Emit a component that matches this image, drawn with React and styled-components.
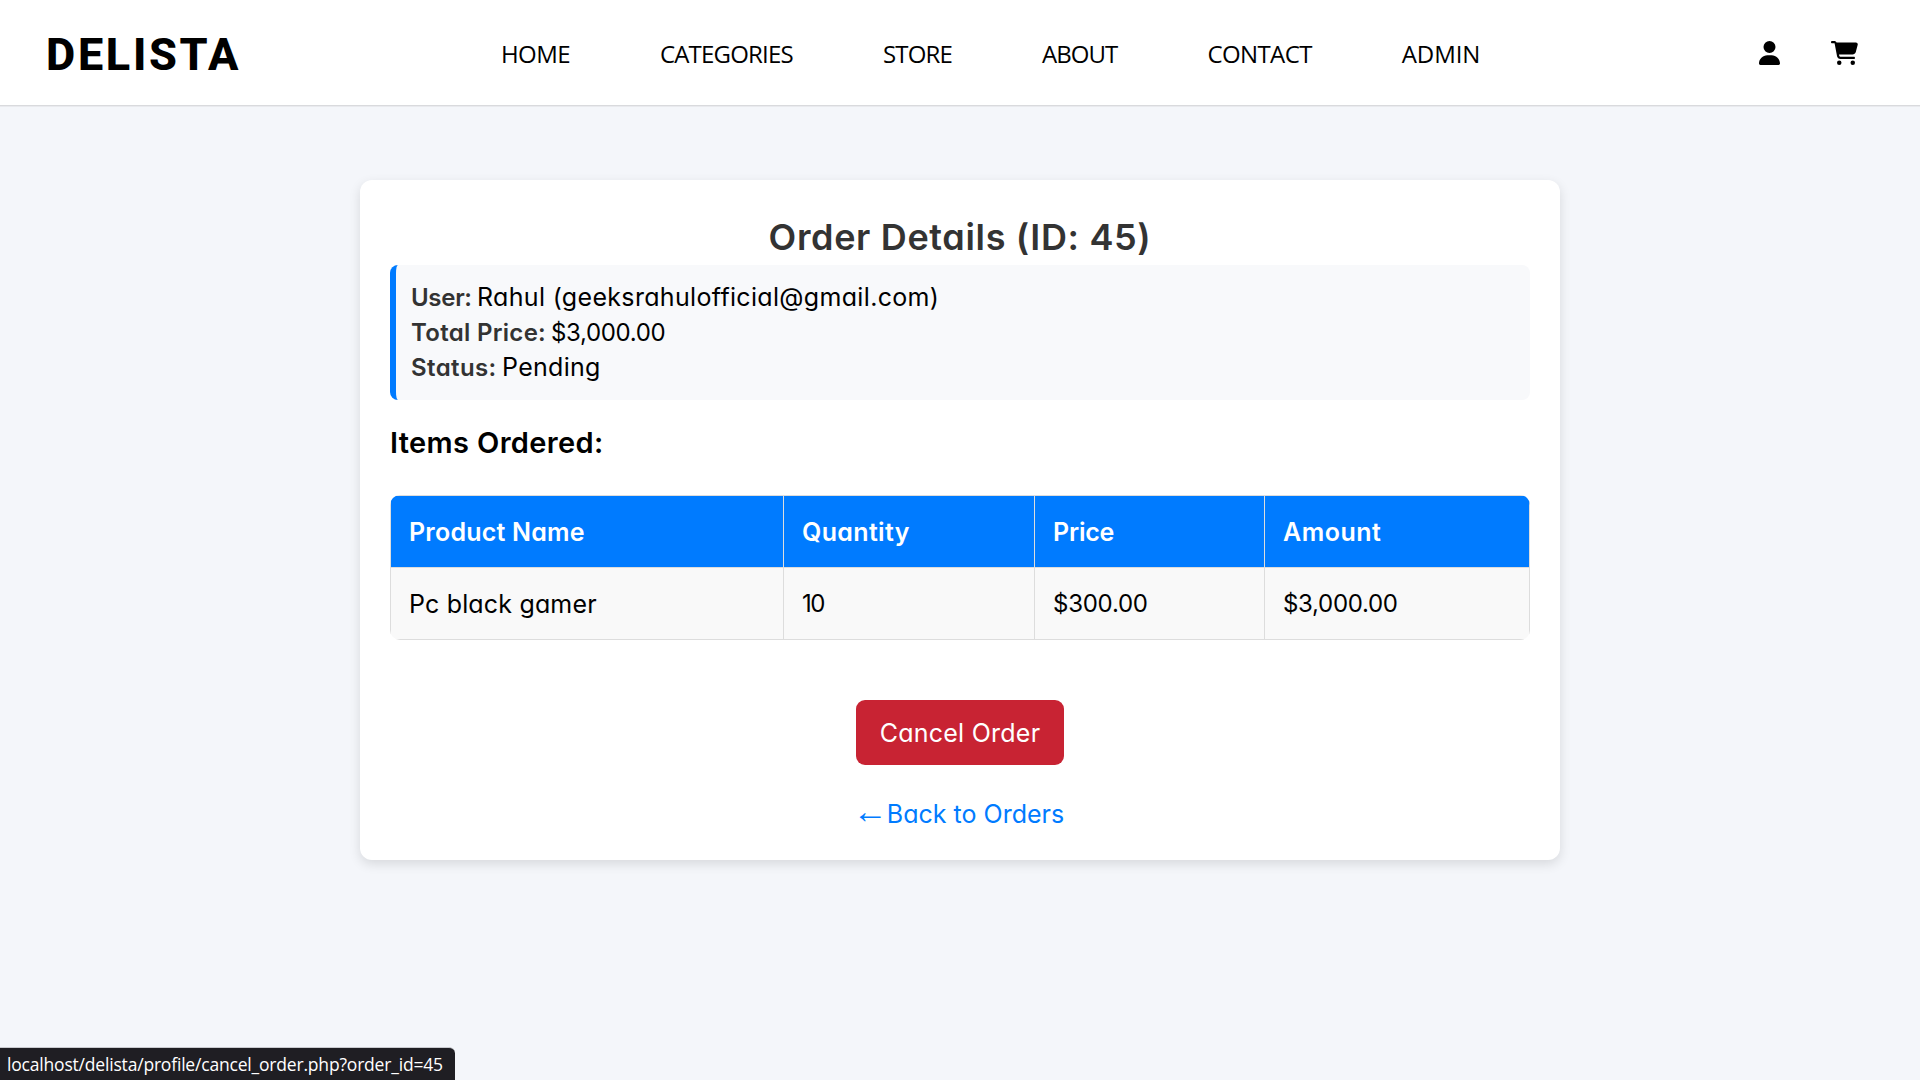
import React from 'react';
import styled, { createGlobalStyle } from 'styled-components';
import { FaUser, FaCartShopping } from 'react-icons/fa6';

const GlobalStyle = createGlobalStyle`
  * { box-sizing: border-box; margin: 0; padding: 0; }
  body {
    min-height: 100vh;
    background: #f4f6fa;
    color: #000;
    font-family: Inter, 'Liberation Sans', sans-serif;
    font-size: 25px;
    font-feature-settings: 'cv11';
  }
`;

const Header = styled.header`
  display: flex;
  align-items: center;
  height: 106px;
  padding: 0 62px 0 46px;
  background: #fff;
  border-bottom: 1px solid #d9dadd;
  box-shadow: 0 1px 0 #e9eaee;
`;

const Logo = styled.a`
  width: 455px;
  padding-top: 3px;
  font-family: Roboto, sans-serif;
  font-size: 45px;
  font-weight: 800;
  line-height: 1;
  letter-spacing: 2.7px;
`;

const Nav = styled.nav`
  display: flex;
  gap: 90px;
  padding-top: 3px;
`;

const NavLink = styled.a`
  font-family: 'Open Sans', 'Noto Sans', sans-serif;
  font-size: 24px;
  line-height: 32px;
  white-space: nowrap;
  letter-spacing: ${(p) => p.$track}px;
`;

const Actions = styled.div`
  display: flex;
  align-items: center;
  gap: 51px;
  margin-left: auto;

  svg { display: block; height: 24px; }
  svg:first-child { width: 21px; }
  svg:last-child { width: 27px; }
`;

const Card = styled.main`
  width: 1200px;
  margin: 74px auto 0;
  padding: 30px;
  background: #fff;
  border-radius: 12px;
  box-shadow: 0 4px 12px rgba(0, 0, 0, 0.12);
`;

const Title = styled.h1`
  color: #333;
  font-size: 36px;
  font-weight: 600;
  line-height: 55px;
  letter-spacing: 0.65px;
  text-align: center;
`;

const Info = styled.section`
  padding: 15px;
  background: #f8f9fb;
  border-left: 6px solid #007bff;
  border-radius: 8px;
`;

const Field = styled.p`
  display: flex;
  line-height: 35px;
`;

const Label = styled.strong`
  width: ${(p) => p.$w}px;
  color: #333;
  font-size: 24px;
  font-weight: 600;
  white-space: nowrap;
  letter-spacing: ${(p) => p.$track}px;
`;

const Text = styled.span`
  font-size: ${(p) => p.$size}px;
  letter-spacing: ${(p) => p.$track}px;
`;

const Subtitle = styled.h2`
  margin-top: 22px;
  font-size: 29px;
  font-weight: 600;
  line-height: 42px;
  letter-spacing: 0.35px;
`;

const TableWrap = styled.div`
  margin-top: 31px;
  border-radius: 10px;
  overflow: hidden;
`;

const Table = styled.table`
  width: 100%;
  table-layout: fixed;
  border-collapse: separate;
  border-spacing: 0;
  border-top: 1px solid #ddd;
  border-left: 1px solid #ddd;
`;

const Col = styled.col`
  width: ${(p) => p.$w}px;
`;

const HeadCell = styled.th`
  height: 72px;
  padding: 0 18px;
  color: #fff;
  background: #007bff;
  border-right: 1px solid #ddd;
  border-bottom: 1px solid #ddd;
  font-weight: 600;
  text-align: left;
  letter-spacing: ${(p) => p.$track}px;
`;

const Cell = styled.td`
  height: 72px;
  padding: 0 18px;
  background: #f9f9f9;
  border-right: 1px solid #ddd;
  border-bottom: 1px solid #ddd;
  font-size: ${(p) => p.$size}px;
  letter-spacing: ${(p) => p.$track}px;
`;

const Buttons = styled.div`
  display: flex;
  flex-direction: column;
  align-items: center;
  margin-top: 60px;
`;

const CancelButton = styled.button`
  width: 208px;
  height: 65px;
  color: #fff;
  background: #c82333;
  border: 0;
  border-radius: 9px;
  font: inherit;
  font-feature-settings: inherit;
  letter-spacing: 0.25px;
`;

const BackLink = styled.a`
  display: flex;
  align-items: baseline;
  height: 35px;
  margin: 27px 0 3px;
  color: #007bff;
  line-height: 35px;
`;

const Arrow = styled.span`
  width: 34px;
  margin-left: -3px;
  font-family: 'Open Sans', 'Noto Sans', sans-serif;
  font-size: 35px;
  font-weight: 300;
`;

const StatusBar = styled.div`
  position: fixed;
  left: 0;
  bottom: 0;
  width: 455px;
  height: 33px;
  padding-left: 7px;
  color: #fff;
  background: #1f1e23;
  border-top: 1px solid #c9cacf;
  border-top-right-radius: 6px;
  font-family: 'Open Sans', 'Noto Sans', sans-serif;
  font-size: 17.5px;
  line-height: 33px;
  letter-spacing: -0.19px;
  white-space: nowrap;
`;

const links = [
  ['HOME', -0.6],
  ['CATEGORIES', -0.8],
  ['STORE', -0.8],
  ['ABOUT', -0.95],
  ['CONTACT', -0.6],
  ['ADMIN', -0.1],
];

const fields = [
  ['User:', 66, -0.3, 'Rahul (geeksrahulofficial@gmail.com)', 25, 0.33],
  ['Total Price:', 140, 0.3, '$3,000.00', 24, -0.35],
  ['Status:', 91, 0.4, 'Pending', 25, 0.3],
];

const columns = [
  ['Product Name', 393, 0.22],
  ['Quantity', 251, 0.35],
  ['Price', 230, -0.2],
  ['Amount', 265, 0.5],
];

const row = [
  ['Pc black gamer', 25, 0.17],
  ['10', 24, -1.4],
  ['$300.00', 24, -0.25],
  ['$3,000.00', 24, -0.3],
];

export default function App() {
  return (
    <>
      <GlobalStyle />
      <Header>
        <Logo>DELISTA</Logo>
        <Nav>
          {links.map(([name, track]) => (
            <NavLink key={name} $track={track}>{name}</NavLink>
          ))}
        </Nav>
        <Actions>
          <FaUser />
          <FaCartShopping />
        </Actions>
      </Header>
      <Card>
        <Title>Order Details (ID: 45)</Title>
        <Info>
          {fields.map(([label, w, labelTrack, value, size, track]) => (
            <Field key={label}>
              <Label $w={w} $track={labelTrack}>{label}</Label>
              <Text $size={size} $track={track}>{value}</Text>
            </Field>
          ))}
        </Info>
        <Subtitle>Items Ordered:</Subtitle>
        <TableWrap>
          <Table>
            <colgroup>
              {columns.map(([name, w]) => <Col key={name} $w={w} />)}
            </colgroup>
            <thead>
              <tr>
                {columns.map(([name, , track]) => (
                  <HeadCell key={name} $track={track}>{name}</HeadCell>
                ))}
              </tr>
            </thead>
            <tbody>
              <tr>
                {row.map(([value, size, track]) => (
                  <Cell key={value} $size={size} $track={track}>{value}</Cell>
                ))}
              </tr>
            </tbody>
          </Table>
        </TableWrap>
        <Buttons>
          <CancelButton>Cancel Order</CancelButton>
          <BackLink><Arrow>←</Arrow>Back to Orders</BackLink>
        </Buttons>
      </Card>
      <StatusBar>localhost/delista/profile/cancel_order.php?order_id=45</StatusBar>
    </>
  );
}
